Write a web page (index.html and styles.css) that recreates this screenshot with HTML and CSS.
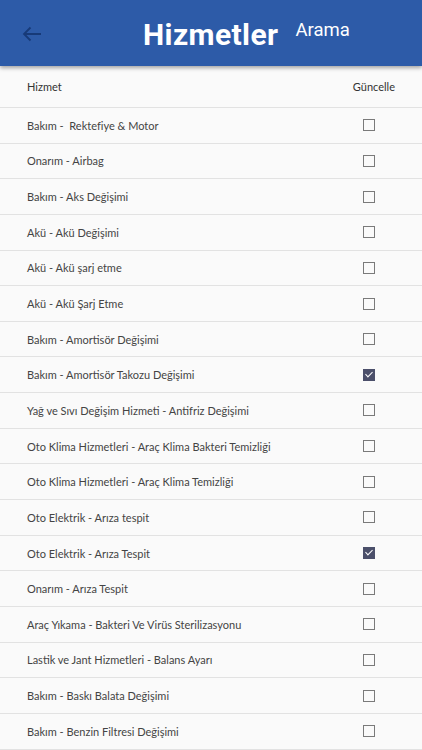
FILE: index.html
```html
<!DOCTYPE html>
<html lang="tr">
<head>
    <meta charset="UTF-8">
    <meta name="viewport" content="width=device-width, initial-scale=1.0">
    <title>Hizmetler</title>
    <link rel="stylesheet" href="styles.css">
</head>
<body>

<div class="topbar">
    <button class="back" aria-label="Geri">
        <svg width="20" height="16" viewBox="0 0 20 16">
            <path d="M19 8H2M8.5 1.5L2 8l6.5 6.5" fill="none" stroke="#173a78" stroke-width="1.8"/>
        </svg>
    </button>
    <h1>Hizmetler</h1>
    <span class="search">Arama</span>
</div>

<div class="table">
    <div class="row head">
        <span>Hizmet</span>
        <span class="col-update">Güncelle</span>
    </div>
    <div class="row"><span>Bakım -&nbsp; Rektefiye &amp; Motor</span><span class="box"></span></div>
    <div class="row"><span>Onarım - Airbag</span><span class="box"></span></div>
    <div class="row"><span>Bakım - Aks Değişimi</span><span class="box"></span></div>
    <div class="row"><span>Akü - Akü Değişimi</span><span class="box"></span></div>
    <div class="row"><span>Akü - Akü şarj etme</span><span class="box"></span></div>
    <div class="row"><span>Akü - Akü Şarj Etme</span><span class="box"></span></div>
    <div class="row"><span>Bakım - Amortisör Değişimi</span><span class="box"></span></div>
    <div class="row"><span>Bakım - Amortisör Takozu Değişimi</span><span class="box checked"></span></div>
    <div class="row"><span>Yağ ve Sıvı Değişim Hizmeti - Antifriz Değişimi</span><span class="box"></span></div>
    <div class="row"><span>Oto Klima Hizmetleri - Araç Klima Bakteri Temizliği</span><span class="box"></span></div>
    <div class="row"><span>Oto Klima Hizmetleri - Araç Klima Temizliği</span><span class="box"></span></div>
    <div class="row"><span>Oto Elektrik - Arıza tespit</span><span class="box"></span></div>
    <div class="row"><span>Oto Elektrik - Arıza Tespit</span><span class="box checked"></span></div>
    <div class="row"><span>Onarım - Arıza Tespit</span><span class="box"></span></div>
    <div class="row"><span>Araç Yıkama - Bakteri Ve Virüs Sterilizasyonu</span><span class="box"></span></div>
    <div class="row"><span>Lastik ve Jant Hizmetleri - Balans Ayarı</span><span class="box"></span></div>
    <div class="row"><span>Bakım - Baskı Balata Değişimi</span><span class="box"></span></div>
    <div class="row"><span>Bakım - Benzin Filtresi Değişimi</span><span class="box"></span></div>
</div>

</body>
</html>
```

FILE: styles.css
```css
body {
    margin: 0;
    background-color: #fafafa;
    font-family: Lato, "Open Sans", sans-serif;
    color: #444;
    overflow: hidden;
}
.topbar {
    height: 66px;
    background-color: #2d5ba8;
    display: flex;
    align-items: center;
    position: relative;
    z-index: 1;
    box-shadow: 0 2px 4px rgba(0, 0, 0, 0.35);
}
.back {
    background: none;
    border: none;
    padding: 0;
    margin: 2px 0 0 22px;
    width: 20px;
    height: 16px;
    display: flex;
}
h1 {
    margin: 2px 0 0 101px;
    color: #fff;
    font-family: Roboto, sans-serif;
    font-weight: bold;
    font-size: 30px;
    letter-spacing: 0.4px;
}
.search {
    color: #fff;
    font-family: Roboto, sans-serif;
    font-size: 18.5px;
    margin-left: 17px;
    align-self: flex-start;
    margin-top: 19px;
}
.row {
    display: flex;
    align-items: center;
    justify-content: space-between;
    height: 34.65px;
    padding: 0 47px 0 27px;
    border-bottom: 1px solid #e2e2e2;
    font-size: 11px;
    color: #444;
}
.row.head {
    height: 41px;
    padding-right: 27px;
    color: #333;
}
.box {
    width: 10px;
    height: 10px;
    border: 1.5px solid #7a7a7a;
}
.box.checked {
    background-color: #4b4f6a;
    border-color: #4b4f6a;
    position: relative;
}
.box.checked::after {
    content: "";
    position: absolute;
    left: 3px;
    top: 0px;
    width: 3px;
    height: 6px;
    border: solid #fff;
    border-width: 0 1.5px 1.5px 0;
    transform: rotate(45deg);
}
```
